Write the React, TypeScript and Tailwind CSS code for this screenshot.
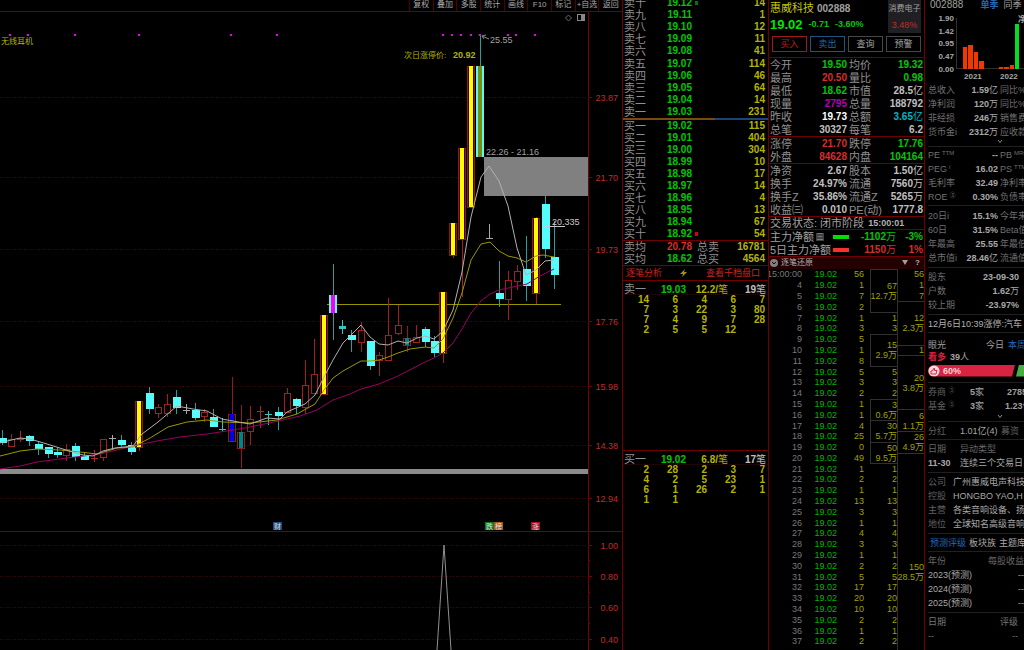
import React from 'react';

type CandleKind = 'down' | 'up' | 'limit' | 'doji' | 'upDoji' | 'downDoji' | 'blue' | 'teal' | 'magenta' | 'olive';

// x, high, open/close top, open/close bottom, low, kind
type Candle = [number, number, number, number, number, CandleKind];

const CANDLES: Candle[] = [
  [2, 430, 438, 443, 445, 'down'],
  [11, 434, 439, 446, 446, 'up'],
  [20, 431, 438, 440, 442, 'upDoji'],
  [29, 435, 436, 441, 446, 'down'],
  [38, 441, 444, 449, 455, 'down'],
  [48, 447, 447, 454, 458, 'down'],
  [57, 447, 452, 455, 458, 'down'],
  [66, 444, 449, 455, 461, 'up'],
  [75, 443, 446, 457, 461, 'down'],
  [84, 453, 456, 460, 460, 'down'],
  [94, 450, 458, 459, 462, 'upDoji'],
  [103, 439, 439, 457, 461, 'up'],
  [112, 435, 438, 439, 450, 'doji'],
  [121, 435, 440, 445, 448, 'down'],
  [131, 442, 445, 452, 455, 'down'],
  [139, 401, 401, 447, 451, 'limit'],
  [149, 387, 393, 409, 414, 'down'],
  [158, 404, 407, 413, 418, 'up'],
  [167, 394, 404, 413, 417, 'up'],
  [176, 390, 397, 408, 414, 'down'],
  [186, 404, 410, 411, 414, 'doji'],
  [195, 403, 410, 418, 420, 'down'],
  [204, 409, 412, 416, 422, 'up'],
  [213, 409, 417, 427, 427, 'down'],
  [222, 418, 429, 430, 431, 'downDoji'],
  [232, 377, 414, 441, 441, 'blue'],
  [241, 405, 432, 448, 468, 'teal'],
  [250, 406, 419, 431, 445, 'up'],
  [260, 406, 411, 412, 428, 'upDoji'],
  [268, 411, 414, 415, 425, 'downDoji'],
  [278, 407, 412, 416, 430, 'down'],
  [287, 388, 393, 412, 412, 'up'],
  [296, 398, 399, 406, 414, 'down'],
  [305, 360, 385, 407, 414, 'up'],
  [314, 339, 374, 393, 393, 'up'],
  [324, 315, 315, 394, 394, 'limit'],
  [333, 264, 295, 313, 340, 'magenta'],
  [342, 320, 326, 329, 334, 'downDoji'],
  [351, 330, 335, 340, 352, 'down'],
  [361, 322, 330, 342, 352, 'up'],
  [370, 341, 341, 366, 370, 'down'],
  [379, 352, 355, 360, 376, 'up'],
  [388, 298, 335, 360, 360, 'up'],
  [398, 305, 325, 333, 335, 'up'],
  [407, 326, 338, 345, 352, 'teal'],
  [416, 325, 337, 342, 342, 'up'],
  [425, 327, 329, 342, 347, 'down'],
  [434, 336, 341, 353, 357, 'down'],
  [443, 292, 292, 353, 363, 'limit'],
  [453, 223, 223, 255, 258, 'limit'],
  [462, 148, 148, 239, 297, 'limit'],
  [471, 66, 66, 207, 207, 'limit'],
  [480, 35, 66, 157, 157, 'olive'],
  [489, 224, 238, 239, 239, 'doji'],
  [499, 261, 293, 299, 307, 'down'],
  [508, 271, 280, 299, 320, 'up'],
  [517, 265, 271, 281, 290, 'up'],
  [526, 236, 269, 286, 301, 'down'],
  [536, 217, 218, 293, 304, 'limit'],
  [545, 196, 204, 249, 258, 'down'],
  [554, 221, 257, 275, 289, 'down']
];

const MA_FAST =
  '0,443 3,442 20,438 30,439 47,444 66,450 83,455 93,456 103,451 115,448 133,446 142,434 158,422 177,406 193,409 207,411 222,419 233,421 250,424 267,418 280,419 287,412 305,404 315,395 324,377 333,360 343,343 361,325 370,337 379,344 388,345 398,341 407,343 417,338 425,336 434,339 443,331 453,310 462,272 471,217 481,177 489,166 499,181 508,206 517,248 526,275 536,270 545,261 554,260';
const MA_MID =
  '0,456 20,451 37,449 60,450 80,452 97,454 117,448 133,447 150,438 168,427 187,422 207,420 223,422 250,423 277,420 297,414 315,404 324,390 333,378 343,371 361,361 370,361 379,360 388,357 398,353 410,349 425,347 434,348 443,339 453,318 462,293 471,260 481,244 490,242 499,251 508,256 517,258 526,262 536,256 543,255 554,257';
const MA_SLOW =
  '0,469 20,466 37,462 67,458 100,454 117,450 133,446 157,441 180,437 207,434 233,430 250,427 283,420 300,416 317,410 333,400 350,394 361,389 379,384 398,376 425,362 434,358 443,353 453,343 462,329 471,313 481,301 490,294 499,290 527,284 540,276 554,269';

const PRICE_TICKS: [number, string][] = [
  [97, '23.87'],
  [177, '21.70'],
  [249, '19.73'],
  [321, '17.76'],
  [386, '15.98'],
  [445, '14.38'],
  [498, '12.94'],
  [545, '1.00'],
  [576, '0.80'],
  [607, '0.60'],
  [639, '0.40']
];

const SIGNAL_DOTS = [10, 28, 75, 139, 231, 277, 443, 452, 461, 471, 480, 508, 516, 535];

const MARKS = [
  { x: 273, text: '财', fill: '#1d4a80' },
  { x: 485, text: '跌', fill: '#0c7a14' },
  { x: 494, text: '榜', fill: '#a85a1c' },
  { x: 531, text: '涨', fill: '#a0101c' }
];

const TOOLS = ['复权', '叠加', '多股', '统计', '画线', 'F10', '标记', '+自选', '返回'];

const SELLS = [
  ['卖十', '19.12', '14'],
  ['卖九', '19.11', '1'],
  ['卖八', '19.10', '12'],
  ['卖七', '19.09', '11'],
  ['卖六', '19.08', '41'],
  ['卖五', '19.07', '114'],
  ['卖四', '19.06', '46'],
  ['卖三', '19.05', '64'],
  ['卖二', '19.04', '14'],
  ['卖一', '19.03', '231']
];

const BUYS = [
  ['买一', '19.02', '115'],
  ['买二', '19.01', '404'],
  ['买三', '19.00', '304'],
  ['买四', '18.99', '10'],
  ['买五', '18.98', '17'],
  ['买六', '18.97', '14'],
  ['买七', '18.96', '4'],
  ['买八', '18.95', '13'],
  ['买九', '18.94', '67'],
  ['买十', '18.92', '54']
];

const SELL_QUEUE = [
  ['14', '6', '4', '6', '7'],
  ['7', '3', '22', '3', '80'],
  ['7', '4', '9', '7', '28'],
  ['2', '5', '5', '12', '']
];
const BUY_QUEUE = [
  ['2', '28', '2', '3', '7'],
  ['4', '2', '5', '23', '1'],
  ['6', '1', '26', '2', '1'],
  ['1', '1', '', '', '']
];

const RED = 'text-[#d82c2c]';
const GREEN = 'text-[#00c800]';
const WHITE = 'text-[#c0c0c0]';
const CYAN = 'text-[#00b4c4]';
const PURPLE = 'text-[#b400b4]';

type Quote = [string, string, string, string, string, string];

const QUOTES: Quote[] = [
  ['今开', '19.50', GREEN, '均价', '19.32', GREEN],
  ['最高', '20.50', RED, '量比', '0.98', GREEN],
  ['最低', '18.62', GREEN, '市值', '28.5亿', WHITE],
  ['现量', '2795', PURPLE, '总量', '188792', WHITE],
  ['昨收', '19.73', 'text-white', '总额', '3.65亿', CYAN],
  ['总笔', '30327', WHITE, '每笔', '6.2', WHITE]
];
const LIMITS: Quote[] = [
  ['涨停', '21.70', RED, '跌停', '17.76', GREEN],
  ['外盘', '84628', RED, '内盘', '104164', GREEN]
];
const BASICS: Quote[] = [
  ['净资', '2.67', WHITE, '股本', '1.50亿', WHITE],
  ['换手', '24.97%', WHITE, '流通', '7560万', WHITE],
  ['换手Z', '35.86%', WHITE, '流通Z', '5265万', WHITE],
  ['收益㈢', '0.010', WHITE, 'PE(动)', '1777.8', WHITE]
];

const TICK_VOLUMES = [
  56, 1, 7, 2, 1, 3, 5, 1, 8, 5, 3, 2, 1, 1, 4, 25, 0, 49, 1, 2, 1, 13, 3, 1, 4, 3, 1, 2, 5, 17, 20, 10, 2, 1, 2
];

interface Group {
  span: string;
  lines: string[];
  boxed?: boolean;
}

const one = (v: string): Group => ({ span: 'row-span-1', lines: [v] });

const ORDER_GROUPS: Group[] = [
  { span: 'row-span-4', lines: ['67', '12.7万'], boxed: true },
  one('1'),
  one('3'),
  { span: 'row-span-3', lines: ['15', '2.9万'], boxed: true },
  one('5'),
  one('3'),
  one('2'),
  { span: 'row-span-2', lines: ['3', '0.6万'], boxed: true },
  { span: 'row-span-2', lines: ['30', '5.7万'], boxed: true },
  { span: 'row-span-2', lines: ['50', '9.5万'], boxed: true },
  ...['1', '2', '1', '13', '3', '1', '4', '3', '1', '2', '5', '17', '20', '10', '2', '1', '2'].map(one)
];

const TRADE_GROUPS: Group[] = [
  one('56'),
  one('1'),
  one('7'),
  { span: 'row-span-4', lines: ['12', '2.3万'], boxed: true },
  { span: 'row-span-1', lines: ['1'], boxed: true },
  { span: 'row-span-5', lines: ['20', '3.8万'], boxed: true },
  { span: 'row-span-2', lines: ['6', '1.1万'], boxed: true },
  { span: 'row-span-2', lines: ['26', '4.9万'], boxed: true },
  { span: 'row-span-22', lines: ['150', '28.5万'], boxed: true }
];

const CandleShape: React.FC<{ candle: Candle }> = ({ candle }) => {
  const [x, high, top, bottom, low, kind] = candle;
  const height = bottom - top;
  const wick = (color: string) => (
    <>
      {high < top && <rect x={x} y={high} width={1} height={top - high} fill={color} />}
      {low > bottom && <rect x={x} y={bottom} width={1} height={low - bottom} fill={color} />}
    </>
  );

  if (kind === 'doji' || kind === 'upDoji' || kind === 'downDoji') {
    const color = kind === 'doji' ? '#a8a8a8' : kind === 'upDoji' ? '#b02424' : '#3cc4c4';
    return (
      <>
        <rect x={x} y={high} width={1} height={low - high} fill={color} />
        <rect x={x - 3} y={top} width={7} height={height} fill={color} />
      </>
    );
  }
  if (kind === 'up') {
    return (
      <>
        {wick('#a02020')}
        <rect x={x - 2.5} y={top + 0.5} width={6} height={height} fill="none" stroke="#a02020" />
      </>
    );
  }
  if (kind === 'down') {
    return (
      <>
        {wick('#2e9c9c')}
        <rect x={x - 3} y={top} width={8} height={height} fill="#54fcfc" />
      </>
    );
  }
  if (kind === 'limit') {
    return (
      <>
        {wick('#a02020')}
        <rect x={x - 3.5} y={top + 0.5} width={7} height={height} fill="#400000" stroke="#8c1a1a" />
        <rect x={x - 2} y={top} width={4} height={height} fill="#fcfc00" />
      </>
    );
  }
  if (kind === 'magenta' || kind === 'olive') {
    return (
      <>
        {wick('#2e9c9c')}
        <rect x={x - 4} y={top} width={8} height={height} fill="#54fcfc" />
        <rect x={x - 2} y={top} width={4} height={height} fill={kind === 'olive' ? '#7c8c10' : '#f800f8'} />
      </>
    );
  }
  return (
    <>
      {wick('#901c1c')}
      <rect x={x - 3.5} y={top + 0.5} width={7} height={height} fill="none" stroke="#901c1c" />
      <rect x={x - 2} y={top} width={4} height={height} fill={kind === 'blue' ? '#0000f8' : '#008484'} />
    </>
  );
};

const KLineChart = () => (
  <svg
    viewBox="0 12 622 638"
    preserveAspectRatio="xMinYMin meet"
    className="w-full flex-1 min-h-0 text-[9px]"
    role="img"
    aria-label="K线图"
  >
    {PRICE_TICKS.map(([y, label]) => (
      <g key={label}>
        <line x1="0" x2="588" y1={y + 0.5} y2={y + 0.5} stroke="#4c0000" strokeDasharray="1 2" />
        <line x1="588" x2="592" y1={y + 0.5} y2={y + 0.5} stroke="#7c0000" />
        <text x="618" y={y + 4} textAnchor="end" fill="#c02c2c">
          {label}
        </text>
      </g>
    ))}
    {[560, 592, 623].map(y => (
      <line key={y} x1="588" x2="590" y1={y + 0.5} y2={y + 0.5} stroke="#7c0000" />
    ))}
    <rect x="484" y="157" width="104" height="39" fill="#808080" />
    <rect x="0" y="469" width="588" height="5" fill="#8c8c8c" />
    <line x1="327" x2="561" y1="304.5" y2="304.5" stroke="#949400" />

    {CANDLES.map(candle => (
      <CandleShape key={candle[0]} candle={candle} />
    ))}

    <g fill="none" strokeWidth="1">
      <polyline points={MA_SLOW} stroke="#980060" />
      <polyline points={MA_MID} stroke="#989800" />
      <polyline points={MA_FAST} stroke="#b0b0b0" />
      <polyline points="437,650 444,545 451,650" stroke="#909090" />
    </g>

    {SIGNAL_DOTS.map(x => (
      <rect key={x} x={x - 1} y="34" width="2" height="2" fill="#f000f0" />
    ))}

    {/* price notes */}
    <g fill="#a0a0a0">
      <path d="M482 36l7 3M482 36l4 -1M482 36l2 3" stroke="#888888" fill="none" />
      <text x="490" y="43">25.55</text>
      <text x="486" y="155">22.26 - 21.16</text>
      <text x="552" y="225" fill="#c8c8c8">20.335</text>
      <line x1="545" x2="565" y1="226.5" y2="226.5" stroke="#c8c8c8" />
    </g>
    <g fill="#b4b400" className="text-[8px]">
      <text x="1" y="44">无线耳机</text>
      <text x="404" y="58">次日涨停价:</text>
      <text x="453" y="58" fontWeight="bold" className="text-[9px]">20.92</text>
    </g>

    {MARKS.map(mark => (
      <g key={mark.text}>
        <rect x={mark.x} y="522" width="9" height="8" fill={mark.fill} />
        <text x={mark.x + 1} y="529" fontSize="7" fill="#e0e0e0">
          {mark.text}
        </text>
      </g>
    ))}

    {/* corner switches */}
    <path d="M568.5 15l3 3l-3 3l-3 -3z" fill="none" stroke="#686868" />
    <rect x="577.5" y="14.5" width="7" height="6" fill="none" stroke="#888888" />
    <rect x="581" y="15" width="3" height="5" fill="#888888" />

    <path d="M0 531.5H622M588.5 12V650" stroke="#780000" fill="none" />
  </svg>
);

// Number in bold, with a trailing 亿 / 万 in the regular weight.
const Amount: React.FC<{ value: string }> = ({ value }) => {
  const unit = /[亿万]$/.test(value) ? value.slice(-1) : '';
  return (
    <>
      {unit ? value.slice(0, -1) : value}
      {unit && <span className="font-normal">{unit}</span>}
    </>
  );
};

const DepthRow: React.FC<{ row: string[]; mark?: string }> = ({ row, mark }) => (
  <div className="flex items-center pr-[3px] pl-px font-bold">
    <span className="w-[22px] text-[11px] font-normal text-[#909090]">{row[0]}</span>
    <span className={`w-[46px] text-right ${GREEN}`}>{row[1]}</span>
    {mark && <span className={`ml-[3px] h-1 w-[3px] ${mark}`} />}
    <span className="flex-1 text-right text-[#b4b400]">{row[2]}</span>
  </div>
);

const Queue: React.FC<{ title: string; price: string; avg: string; count: string; rows: string[][] }> = ({
  title,
  price,
  avg,
  count,
  rows
}) => (
  <>
    <div className="grid h-[14px] grid-cols-[22px_40px_42px_1fr] items-center border-b border-dotted border-[#400000] pr-0.5 pl-px text-right font-bold">
      <span className="text-left text-[11px] font-normal text-[#909090]">{title}</span>
      <span className={GREEN}>{price}</span>
      <span className="text-[#b4b400]">
        {avg}/<span className="font-normal">笔</span>
      </span>
      <span className={WHITE}>
        {count}
        <span className="font-normal">笔</span>
      </span>
    </div>
    <table className="w-full table-fixed text-right font-bold text-[#b4b400]">
      <tbody>
        {rows.map((row, i) => (
          <tr key={i} className="h-[10px] leading-[10px]">
            {row.map((cell, j) => (
              <td key={j} className="p-0 pr-[3px]">
                {cell}
              </td>
            ))}
          </tr>
        ))}
      </tbody>
    </table>
  </>
);

const OrderBook = () => (
  <section className="flex w-[146px] shrink-0 flex-col border-l border-[#700000] text-[10px]">
    <div className="flex h-[118px] flex-col justify-end overflow-hidden">
      <div className="grid h-[121px] shrink-0 grid-rows-10 leading-3">
        {SELLS.map((row, i) => (
          <DepthRow key={row[0]} row={row} mark={i === 0 ? 'bg-[#007800]' : undefined} />
        ))}
      </div>
    </div>
    <div className="flex h-[2px] shrink-0">
      <div className="w-[92px] bg-[#7a4a12]" />
      <div className="flex-1 bg-[#1c4474]" />
    </div>
    <div className="grid h-[120px] shrink-0 grid-rows-10 leading-3">
      {BUYS.map((row, i) => (
        <DepthRow key={row[0]} row={row} mark={i === 9 ? 'bg-[#d80000]' : undefined} />
      ))}
    </div>
    <div className="grid h-[26px] shrink-0 grid-cols-[22px_46px_27px_1fr] items-center border-y border-[#700000] pr-[3px] pl-px text-right leading-3 font-bold text-[#b4b400]">
      <span className="text-[11px] font-normal text-[#909090]">卖均</span>
      <span className={RED}>20.78</span>
      <span className="text-[11px] font-normal text-[#909090]">总卖</span>
      <span>16781</span>
      <span className="text-[11px] font-normal text-[#909090]">买均</span>
      <span className={GREEN}>18.62</span>
      <span className="text-[11px] font-normal text-[#909090]">总买</span>
      <span>4564</span>
    </div>
    <div className="flex h-[15px] shrink-0 items-center justify-between border-b border-[#700000] pr-2 pl-[3px] text-[9px] leading-3 text-[#d02020]">
      <button>逐笔分析</button>
      <svg viewBox="0 0 8 8" className="h-2 w-2" aria-hidden="true">
        <path d="M5 0L0 5h3L2 8l5-5H4z" fill="#a89018" />
      </svg>
      <button>查看千档盘口</button>
    </div>
    <div className="h-[169px] shrink-0">
      <Queue title="卖一" price="19.03" avg="12.2" count="19" rows={SELL_QUEUE} />
    </div>
    <div className="flex-1 border-t border-[#700000]">
      <Queue title="买一" price="19.02" avg="6.8" count="17" rows={BUY_QUEUE} />
    </div>
  </section>
);

const QuoteGrid: React.FC<{ rows: Quote[] }> = ({ rows }) => (
  <div className="border-t border-[#700000] pr-px pl-px">
    {rows.map(([a, av, ac, b, bv, bc]) => (
      <div key={a} className="flex h-[13px] items-center leading-3 whitespace-nowrap">
        <span className="w-[33px] text-[11px] text-[#909090]">{a}</span>
        <span className={`w-11 text-right font-bold ${ac}`}>{av}</span>
        <span className="ml-[2px] w-8 text-[11px] text-[#909090]">{b}</span>
        <span className={`flex-1 text-right font-bold ${bc}`}>
          <Amount value={bv} />
        </span>
      </div>
    ))}
  </div>
);

const TickGroup: React.FC<{ group: Group; side: string }> = ({ group, side }) => (
  <div
    className={`flex min-w-0 flex-col items-end justify-center whitespace-nowrap leading-[10px] ${group.span} ${
      group.boxed ? `border-t border-[#303030] ${side}` : ''
    }`}
  >
    {group.lines.map(line => (
      <span key={line}>{line}</span>
    ))}
  </div>
);

const TickList = () => (
  <div className="min-h-0 flex-1 overflow-hidden">
    <div className="flex h-[421px] text-[9px] leading-[10px] text-[#a0a000]">
      <div className="grid w-[95px] grid-rows-39">
        {TICK_VOLUMES.map((volume, i) => (
          <div key={i} className="grid grid-cols-[33px_35px_27px] items-center justify-items-end">
            <span className="text-[#787878]">{i === 0 ? '15:00:00' : i + 3}</span>
            <span className="text-[#00b400]">19.02</span>
            <span>{volume}</span>
          </div>
        ))}
      </div>
      <div className="ml-[6px] grid w-7 grid-cols-1 grid-rows-39 border-r border-[#303030]">
        {ORDER_GROUPS.map((group, i) => (
          <TickGroup key={i} group={group} side="border-l border-b -mb-px" />
        ))}
      </div>
      <div className="grid min-w-0 flex-1 grid-cols-1 grid-rows-39">
        {TRADE_GROUPS.map((group, i) => (
          <TickGroup key={i} group={group} side="" />
        ))}
      </div>
    </div>
  </div>
);

const StockDetail = () => (
  <section className="flex w-[157px] shrink-0 flex-col border-x border-[#700000] text-[10px]">
    <header className="h-[57px] shrink-0 pr-[3px] pl-px">
      <div className="flex h-[34px] justify-between">
        <div className="whitespace-nowrap">
          <div className="flex h-4 items-center gap-[3px] text-[#c8c800]">
            <h1 className="text-[11px]">惠威科技</h1>
            <span className="font-bold text-[#a0a0a0]">002888</span>
          </div>
          <div className={`flex h-[18px] items-center gap-1.5 text-[9px] font-bold ${GREEN}`}>
            <span className="text-[13px] text-[#00e800]">19.02</span>
            <span>-0.71</span>
            <span>-3.60%</span>
          </div>
        </div>
        <div className="flex h-[33px] w-[33px] flex-col items-center justify-center gap-1 bg-[#202024] text-[8px] leading-3 whitespace-nowrap text-[#a0a0a0]">
          <span>消费电子</span>
          <span className="text-[9px] text-[#c02c2c]">3.48%</span>
        </div>
      </div>
      <div className="mt-0.5 ml-0.5 grid grid-cols-4 gap-[3px] text-[9px] leading-3">
        <button className="h-4 border border-[#a01818] text-[#b82020]">买入</button>
        <button className="h-4 border border-[#1c5484] text-[#2468a0]">卖出</button>
        <button className="h-4 border border-[#484848] text-[#a0a0a0]">查询</button>
        <button className="h-4 border border-[#484848] text-[#a0a0a0]">预警</button>
      </div>
    </header>
    <QuoteGrid rows={QUOTES} />
    <QuoteGrid rows={LIMITS} />
    <QuoteGrid rows={BASICS} />
    <div className="flex h-[13px] shrink-0 items-center gap-1 border-t border-[#700000] pl-px leading-3 whitespace-nowrap text-[#a0a0a0]">
      <span className="text-[11px]">交易状态: 闭市阶段</span>
      <span className="text-[9px] font-bold text-[#b0b0b0]">15:00:01</span>
    </div>
    <div className="h-[28px] shrink-0 border-y border-[#700000] pr-px pl-px leading-3 text-[#a0a0a0]">
      <div className="flex h-[13px] items-center">
        <span className="flex w-[63px] items-center gap-0.5 text-[11px]">
          主力净额
          <span className="flex h-2 w-2 items-center justify-center bg-[#404040] text-[7px]">三</span>
        </span>
        <span className="h-1 w-4 bg-[#00e000]" />
        <span className={`flex-1 text-right font-bold ${GREEN}`}>
          <Amount value="-1102万" />
        </span>
        <span className={`w-[27px] text-right font-bold ${GREEN}`}>-3%</span>
      </div>
      <div className="flex h-[13px] items-center">
        <span className="w-[63px] text-[11px] whitespace-nowrap">5日主力净额</span>
        <span className="h-1 w-4 bg-[#f83030]" />
        <span className={`flex-1 text-right font-bold ${RED}`}>
          <Amount value="1150万" />
        </span>
        <span className={`w-[27px] text-right font-bold ${RED}`}>1%</span>
      </div>
    </div>
    <div className="flex h-[12px] shrink-0 items-center gap-[3px] bg-[#240000] pr-1 pl-px text-[8px] leading-none text-[#b0b0b0]">
      <svg viewBox="0 0 8 8" className="h-2 w-2" aria-hidden="true">
        <circle cx="4" cy="4" r="4" fill="#808080" />
        <path d="M2 3l2 2l2-2" stroke="#240000" fill="none" />
      </svg>
      <h2 className="flex-1">逐笔还原</h2>
      <svg viewBox="0 0 6 6" className="h-1.5 w-1.5" aria-hidden="true">
        <path d="M0 0h6L3 5z" fill="#a0a0a0" />
      </svg>
      <span className="pl-1 font-bold">?</span>
    </div>
    <TickList />
  </section>
);

const Section: React.FC<{ className: string; children: React.ReactNode }> = ({ className, children }) => (
  <div className={`flex shrink-0 flex-col justify-center border-t border-[#202020] ${className}`}>{children}</div>
);

// Label and value pair followed by the label of the next pair, which runs past the panel edge.
const Pair: React.FC<{ label: string; sup?: string; value: string; next?: string; nextSup?: string }> = ({
  label,
  sup,
  value,
  next,
  nextSup
}) => (
  <div className="flex h-[14px] items-center justify-between">
    <span className="text-[#707070]">
      {label}
      {sup && <sup className="ml-0.5 text-[6px]">{sup}</sup>}
    </span>
    <span className="flex-1 text-right font-bold text-[#a8a8a8]">
      <Amount value={value} />
    </span>
    {next && (
      <span className="ml-0.5 w-6 text-[#707070]">
        {next}
        {nextSup && <sup className="ml-0.5 text-[6px]">{nextSup}</sup>}
      </span>
    )}
  </div>
);

const Line: React.FC<{ label: string; text: string }> = ({ label, text }) => (
  <div className="flex h-[14px] items-center gap-[7px]">
    <span className="text-[#606060]">{label}</span>
    <span className="text-[#a8a8a8]">{text}</span>
  </div>
);

const Chevron = () => (
  <svg viewBox="0 0 6 5" className="mx-auto h-[5px] w-1.5 translate-x-6" aria-hidden="true">
    <path d="M1 1l2 2.5L5 1" stroke="#909090" fill="none" />
  </svg>
);

const ProfitChart = () => (
  <svg viewBox="0 0 96 68" className="h-[68px] w-24 shrink-0 text-[8px] font-bold" role="img" aria-label="净利润">
    <g fill="#a8a8a8" textAnchor="end">
      <text x="26" y="9">1.90</text>
      <text x="26" y="22">1.42</text>
      <text x="26" y="34">0.95</text>
      <text x="26" y="47">0.47</text>
      <text x="26" y="60">0.00</text>
    </g>
    <path d="M28.5 6V56M28 56.5H96" stroke="#303030" fill="none" />
    <g fill="#f03800">
      <rect x="35" y="35" width="4" height="22" />
      <rect x="40" y="33" width="5" height="24" />
      <rect x="46" y="40" width="4" height="17" />
      <rect x="51" y="49" width="5" height="8" />
      <rect x="71" y="55" width="4" height="2" />
      <rect x="76" y="55" width="5" height="2" />
      <rect x="82" y="53" width="4" height="4" />
    </g>
    <rect x="87" y="12" width="4" height="45" fill="#00e020" />
    <g fill="#a8a8a8">
      <text x="36" y="67">2021</text>
      <text x="72" y="67">2022</text>
      <text x="90" y="10">净</text>
    </g>
  </svg>
);

const Fundamentals = () => (
  <aside className="flex w-[99px] shrink-0 flex-col overflow-hidden pl-[3px] text-[9px] leading-3 whitespace-nowrap">
    <div className="flex h-[12px] shrink-0 items-center gap-[5px] pb-0.5 text-[#a0a0a0]">
      <span className="mr-3 pl-0.5 text-[10px]">002888</span>
      <a href="#quarter" className="font-bold text-[#2468b8]">单季</a>
      <a href="#yoy">同季</a>
    </div>
    <ProfitChart />
    <div className="h-[66px] shrink-0 pt-[3px]">
      <Pair label="总收入" value="1.59亿" next="同比%" />
      <Pair label="净利润" value="120万" next="同比%" />
      <Pair label="非经损" value="246万" next="销售费" />
      <Pair label="货币金i" value="2312万" next="应收款" />
      <Chevron />
    </div>
    <Section className="h-[59px]">
      <Pair label="PE" sup="TTM" value="--" next="PB" nextSup="MRQ" />
      <Pair label="PEG" sup="i" value="16.02" next="PS" nextSup="TTM" />
      <Pair label="毛利率" value="32.49" next="净利率" />
      <Pair label="ROE" sup="③" value="0.30%" next="负债率" />
    </Section>
    <Section className="h-[62px]">
      <Pair label="20日i" value="15.1%" next="今年来" />
      <Pair label="60日" value="31.5%" next="Beta值" />
      <Pair label="年最高" value="25.55" next="年最低" />
      <Pair label="总市值i" value="28.46亿" next="流通值" />
    </Section>
    <Section className="h-[47px] pr-[5px]">
      <Pair label="股东" value="23-09-30" />
      <Pair label="户数" value="1.62万" />
      <Pair label="较上期" value="-23.97%" />
    </Section>
    <Section className="h-[18px] text-[#b0b0b0]">
      <span>12月6日10:39涨停:汽车</span>
    </Section>
    <Section className="h-[50px]">
      <div className="flex text-[#a0a0a0]">
        <span className="flex-1">眼光</span>
        <span className="mr-1">今日</span>
        <a href="#week" className="w-4 text-[#2468b8]">本周</a>
      </div>
      <div className="flex gap-1 font-bold text-[#a0a0a0]">
        <span className="text-[#d82040]">看多</span>
        <span>
          39<span className="font-normal">人</span>
        </span>
      </div>
      <div className="mt-0.5 flex h-3 gap-px">
        <div className="flex flex-1 items-center gap-[3px] rounded-l-full bg-[#d82440] font-bold text-[#f8d0d8] [clip-path:polygon(0_0,100%_0,calc(100%-3px)_100%,0_100%)]">
          <svg viewBox="0 0 12 12" className="h-3 w-3" aria-hidden="true">
            <circle cx="6" cy="6" r="5.5" fill="#f8d8dc" />
            <path d="M3 6v3h5l1-3.500H6.500V3.500L6 3L4.500 6z" fill="none" stroke="#d82440" />
          </svg>
          60%
        </div>
        <div className="w-2 bg-[#48b040] [clip-path:polygon(3px_0,100%_0,100%_100%,0_100%)]" />
      </div>
    </Section>
    <Section className="h-[39px]">
      <div className="grid h-[14px] grid-cols-[42px_37px_1fr] font-bold text-[#a0a0a0]">
        <span className="font-normal text-[#606060]">券商 <sup className="text-[6px]">③</sup></span>
        <span>5<span className="font-normal">家</span></span>
        <span>2785</span>
      </div>
      <div className="grid h-[14px] grid-cols-[42px_35px_1fr] font-bold text-[#a0a0a0]">
        <span className="font-normal text-[#606060]">基金 <sup className="text-[6px]">③</sup></span>
        <span>3<span className="font-normal">家</span></span>
        <span>1.23<span className="font-normal">亿</span></span>
      </div>
      <Chevron />
    </Section>
    <Section className="h-[18px]">
      <div className="flex text-[#606060]">
        <span className="w-8">分红</span>
        <span className="w-[41px] text-[#a8a8a8]">1.01亿(4)</span>
        <span>募资</span>
      </div>
    </Section>
    <Section className="h-[33px]">
      <div className="flex h-[14px] items-center text-[#686868]">
        <span className="w-8">日期</span>
        <span>异动类型</span>
      </div>
      <div className="flex h-[14px] items-center text-[#a8a8a8]">
        <span className="w-8 font-bold">11-30</span>
        <span>连续三个交易日</span>
      </div>
    </Section>
    <Section className="h-[61px]">
      <Line label="公司" text="广州惠威电声科技" />
      <Line label="控股" text="HONGBO YAO,H" />
      <Line label="主营" text="各类音响设备、扬" />
      <Line label="地位" text="全球知名高级音响" />
    </Section>
    <Section className="h-[18px]">
      <nav className="flex gap-[3px] pl-0.5 text-[#a8a8a8]">
        <a href="#forecast" className="text-[#2468b8]">预测评级</a>
        <a href="#sector">板块族</a>
        <a href="#theme">主题库</a>
      </nav>
    </Section>
    <Section className="h-[61px] text-[#a8a8a8]">
      <div className="flex h-[14px] items-center justify-between text-[#686868]">
        <span>年份</span>
        <span>每股收益</span>
      </div>
      {['2023', '2024', '2025'].map(year => (
        <div key={year} className="flex h-[14px] items-center justify-between">
          <span>{year}(预测)</span>
          <span>--</span>
        </div>
      ))}
    </Section>
    <Section className="h-[47px] pr-1.5 text-[#787878]">
      <div className="flex h-[14px] items-center justify-between">
        <span>日期</span>
        <span>评级</span>
      </div>
      <div className="flex h-[14px] items-center justify-between">
        <span>--</span>
        <span>--</span>
      </div>
      <div className="flex h-[14px] items-center justify-between">
        <span>--</span>
        <span>--</span>
      </div>
    </Section>
  </aside>
);

export default function App() {
  return (
    <div className="flex h-screen overflow-hidden bg-black font-['Liberation_Sans','Noto_Sans_CJK_SC',sans-serif]">
      <main className="flex min-w-0 flex-1 flex-col">
        <div className="flex h-3 shrink-0 justify-end overflow-hidden border-b border-[#700000]">
          <nav className="grid w-[213px] grid-cols-9">
            {TOOLS.map(tool => (
              <button
                key={tool}
                className="h-3 border-l border-[#500000] pb-[3px] text-[8px] leading-[9px] whitespace-nowrap text-[#a8a8a8]"
              >
                {tool}
              </button>
            ))}
          </nav>
        </div>
        <KLineChart />
      </main>
      <OrderBook />
      <StockDetail />
      <Fundamentals />
    </div>
  );
}
